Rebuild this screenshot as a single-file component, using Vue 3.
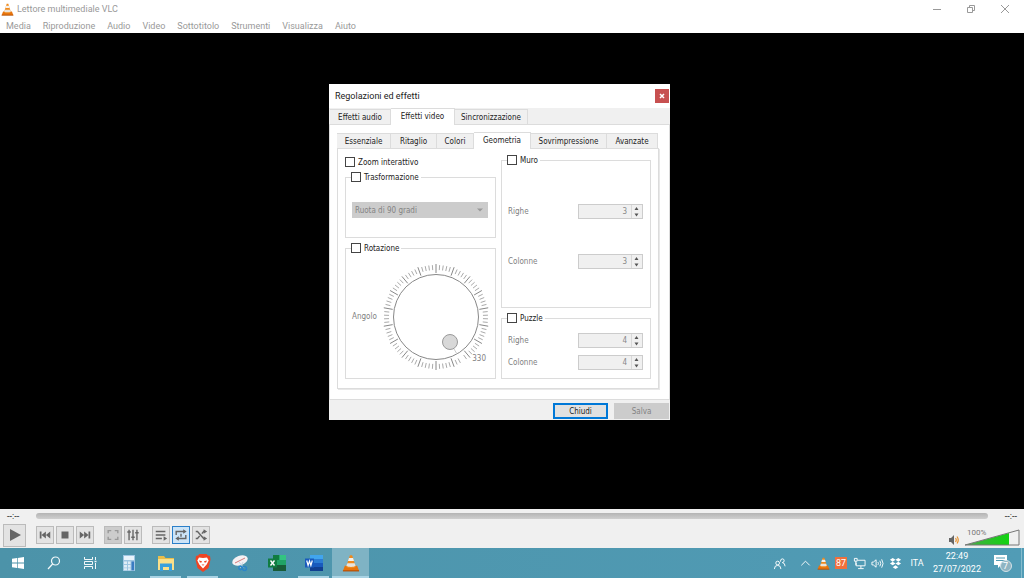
<script setup>
const menus = ['Media', 'Riproduzione', 'Audio', 'Video', 'Sottotitolo', 'Strumenti', 'Visualizza', 'Aiuto']
const outerTabs = ['Effetti audio', 'Effetti video', 'Sincronizzazione']
const innerTabs = ['Essenziale', 'Ritaglio', 'Colori', 'Geometria', 'Sovrimpressione', 'Avanzate']
const ticks = Array.from({ length: 90 }, (_, i) => i)
  .filter((i) => i !== 37)
  .map((i) => {
    const a = (i * 4 * Math.PI) / 180
    const inner = i % 5 === 0 ? 44 : 47
    const outer = i % 5 === 0 ? 53 : 52
    return {
      major: i % 5 === 0,
      x1: 54 + inner * Math.sin(a),
      y1: 54 - inner * Math.cos(a),
      x2: 54 + outer * Math.sin(a),
      y2: 54 - outer * Math.cos(a)
    }
  })
const wall = [
  { id: 'muro-righe', label: 'Righe', value: 3 },
  { id: 'muro-colonne', label: 'Colonne', value: 3 }
]
const puzzle = [
  { id: 'puzzle-righe', label: 'Righe', value: 4 },
  { id: 'puzzle-colonne', label: 'Colonne', value: 4 }
]
</script>

<template>
  <div class="screen">
    <svg class="defs" width="0" height="0" aria-hidden="true">
      <symbol id="cone" viewBox="0 0 16 16">
        <path d="M2.500 10.500h11l1.700 4.500H.8z" fill="#e8740c" />
        <path d="M7 1h2l3.300 10.600c-1.600 1.400-7 1.400-8.600 0z" fill="#f08a1c" />
        <path d="M6.200 3.500h3.600l.9 2.700H5.300z" fill="#f4f1ec" />
        <path d="M4.700 8.200h6.600l.8 2.500c-1.700 1-6.500 1-8.200 0z" fill="#e9e4dc" />
        <path d="M.8 15h14.400" stroke="#b04d06" />
      </symbol>
    </svg>

    <header class="titlebar">
      <svg class="app-icon" viewBox="0 0 16 16"><use href="#cone" /></svg>
      <span class="app-title">Lettore multimediale VLC</span>
      <div class="win-controls">
        <button aria-label="Riduci a icona"><svg viewBox="0 0 10 10"><path d="M1 5.500h8" /></svg></button>
        <button aria-label="Ripristina"><svg viewBox="0 0 10 10"><path d="M1.500 3.500h5v5h-5zM3.500 3.500v-2h5v5h-2" /></svg></button>
        <button aria-label="Chiudi finestra"><svg viewBox="0 0 10 10"><path d="M1 1l8 8M9 1L1 9" /></svg></button>
      </div>
    </header>
    <nav class="menubar">
      <button v-for="m in menus" :key="m">{{ m }}</button>
    </nav>

    <main class="video">
      <section class="dialog" role="dialog" aria-labelledby="dialog-title">
        <div class="dialog-title">
          <h1 id="dialog-title">Regolazioni ed effetti</h1>
          <button class="close" aria-label="Chiudi dialogo"><svg viewBox="0 0 8 8"><path d="M2 2l4 4M6 2L2 6" /></svg></button>
        </div>
        <div class="tabs outer" role="tablist">
          <button v-for="(t, i) in outerTabs" :key="t" role="tab" :aria-selected="i === 1" :class="{ on: i === 1 }">{{ t }}</button>
        </div>
        <div class="outer-panel">
          <div class="tabs inner" role="tablist">
            <button v-for="(t, i) in innerTabs" :key="t" role="tab" :aria-selected="i === 3" :class="{ on: i === 3 }">{{ t }}</button>
          </div>
          <div class="inner-panel">
            <div class="column">
              <label class="check zoom-check"><input type="checkbox" /><span>Zoom interattivo</span></label>
              <fieldset class="transform-group">
                <legend><label class="check"><input type="checkbox" /><span>Trasformazione</span></label></legend>
                <div class="combo">
                  <select aria-label="Tipo di trasformazione" disabled><option>Ruota di 90 gradi</option></select>
                  <svg viewBox="0 0 8 6"><path d="M1 1.500l3 3 3-3z" /></svg>
                </div>
              </fieldset>
              <fieldset class="rotation-group">
                <legend><label class="check"><input type="checkbox" /><span>Rotazione</span></label></legend>
                <div class="rotation">
                  <span class="muted">Angolo</span>
                  <div class="dial">
                    <svg viewBox="0 0 108 108" role="img" aria-label="Manopola angolo">
                      <line v-for="(t, i) in ticks" :key="i" :x1="t.x1" :y1="t.y1" :x2="t.x2" :y2="t.y2" :class="{ major: t.major }" />
                      <circle class="ring" cx="54" cy="54" r="42.500" />
                      <path class="pointer" d="M72 86l3 5" />
                      <circle class="knob" cx="68" cy="79" r="7.500" />
                    </svg>
                    <output class="angle">330</output>
                  </div>
                </div>
              </fieldset>
            </div>
            <div class="column right">
              <fieldset class="wall-group">
                <legend><label class="check"><input type="checkbox" /><span>Muro</span></label></legend>
                <div v-for="f in wall" :key="f.id" class="field">
                  <label :for="f.id">{{ f.label }}</label>
                  <div class="spin">
                    <input :id="f.id" type="number" :value="f.value" disabled />
                    <svg viewBox="0 0 11 13"><path class="sep" d="M.5 0v13" /><path d="M3.500 5l2-3 2 3zM3.500 8.500l2 3 2-3z" /></svg>
                  </div>
                </div>
              </fieldset>
              <fieldset class="puzzle-group">
                <legend><label class="check"><input type="checkbox" /><span>Puzzle</span></label></legend>
                <div v-for="f in puzzle" :key="f.id" class="field">
                  <label :for="f.id">{{ f.label }}</label>
                  <div class="spin">
                    <input :id="f.id" type="number" :value="f.value" disabled />
                    <svg viewBox="0 0 11 13"><path class="sep" d="M.5 0v13" /><path d="M3.500 5l2-3 2 3zM3.500 8.500l2 3 2-3z" /></svg>
                  </div>
                </div>
              </fieldset>
            </div>
          </div>
        </div>
        <div class="dialog-footer">
          <button class="primary">Chiudi</button>
          <button disabled>Salva</button>
        </div>
      </section>
    </main>

    <section class="controls">
      <div class="seek">
        <span>--:--</span>
        <input type="range" min="0" max="100" value="0" aria-label="Posizione" disabled />
        <span>--:--</span>
      </div>
      <div class="buttons">
        <button class="play" aria-label="Riproduci"><svg viewBox="0 0 16 16"><path d="M3 2l11 6-11 6z" /></svg></button>
        <div class="group">
          <button aria-label="Precedente"><svg viewBox="0 0 16 16"><path d="M2 4h2v8H2zM9 4v8L4 8zM14 4v8L9 8z" /></svg></button>
          <button aria-label="Ferma"><svg viewBox="0 0 16 16"><path d="M4 4h8v8H4z" /></svg></button>
          <button aria-label="Successivo"><svg viewBox="0 0 16 16"><path d="M12 4h2v8h-2zM7 4v8l5-4zM2 4v8l5-4z" /></svg></button>
        </div>
        <div class="group">
          <button class="off" aria-label="Schermo intero"><svg viewBox="0 0 16 16"><path class="line" d="M2.500 6V3H6M10 3h3.500v3M13.500 10v3H10M6 13H2.500v-3" /></svg></button>
          <button aria-label="Impostazioni estese"><svg viewBox="0 0 16 16"><path class="line" d="M3.500 2v12M8 2v12M12.500 2v12M1.500 4.500h4M6 10.500h4M10.500 5.500h4" /></svg></button>
        </div>
        <div class="group">
          <button aria-label="Scaletta"><svg viewBox="0 0 16 16"><path class="line" d="M2 4h11M2 8h11M2 12h7" /><path d="M11 9.500l4 2.500-4 2.500z" /></svg></button>
          <button class="active" aria-label="Ripeti"><svg viewBox="0 0 16 16"><path class="line" d="M2.500 8V4H12M13.500 8v4H4M8 6.500v3.500" /><path d="M10.500 1.500l4 2.500-4 2.500zM5.500 9.500l-4 2.500 4 2.500z" /></svg></button>
          <button aria-label="Casuale"><svg viewBox="0 0 16 16"><path class="line" d="M2 4h2l7 8h1M2 12h2l2.500-3M9 6.500L11 4h1" /><path d="M11 1.500l4 2.500-4 2.500zM11 9.500l4 2.500-4 2.500z" /></svg></button>
        </div>
        <div class="volume">
          <svg class="speaker" viewBox="0 0 12 12"><path d="M1 4h2l3-3v10L3 8H1z" fill="#666" /><path d="M7.500 4q1.500 2 0 4M9 2.500q2.500 3.500 0 7" fill="none" stroke="#e8912c" stroke-width="1.200" /></svg>
          <label class="vol-slider">
            <svg viewBox="0 0 56 17">
              <defs><linearGradient id="vol"><stop offset="0" stop-color="#5fa05f" /><stop offset=".35" stop-color="#35b735" /><stop offset="1" stop-color="#12d312" /></linearGradient></defs>
              <path d="M1 16L45 4v12z" fill="url(#vol)" />
              <path d="M1 16L55 1v15z" fill="none" stroke="#777" />
            </svg>
            <span>100%</span>
            <input type="range" min="0" max="125" value="100" aria-label="Volume" />
          </label>
        </div>
      </div>
    </section>

    <footer class="taskbar">
      <div class="system">
        <button aria-label="Start"><svg viewBox="0 0 16 16" fill="#fff"><path d="M2 3.700l5-.7v4.600H2zM7.700 2.900L14 2v5.600H7.700zM2 8.400h5V13l-5-.7zM7.700 8.400H14V14l-6.300-.9z" /></svg></button>
        <button aria-label="Cerca"><svg viewBox="0 0 16 16" fill="none" stroke="#f2f8fa" stroke-width="1.200"><circle cx="9.500" cy="6" r="4" /><path d="M6.600 9L2 14" /></svg></button>
        <button aria-label="Visualizzazione attività"><svg viewBox="0 0 16 16" fill="none" stroke="#f2f8fa"><path d="M2.500 2v2.500h8V2M2.500 14v-2.500h8V14M2.500 6.500h8v3h-8zM13.500 2v3M13.500 8v6" /><path d="M12.500 6.500h2" stroke-width="1.500" /></svg></button>
      </div>
      <div class="apps">
        <button aria-label="Calcolatrice"><svg viewBox="0 0 18 18"><path d="M3 1h12v16H3z" fill="#9fc6e2" /><path d="M4 2h10v4H4z" fill="#e9f4fb" /><path d="M4 7.500h3v2.500H4zM8 7.500h2.500v2.500H8zM4 11h3v2.500H4zM8 11h2.500v2.500H8zM4 14.300h3v2H4zM8 14.300h2.500v2H8z" fill="#e0edf6" /><path d="M11.500 7.500H14v8.800h-2.500z" fill="#397bc2" /></svg></button>
        <button class="open" aria-label="Esplora file"><svg viewBox="0 0 18 18"><path d="M1 2h6l1.500 2H17v12H1z" fill="#e9bd4b" /><path d="M1 5h16v11H1z" fill="#fae08a" /><path d="M3 9.500h12V17h-3v-4H6v4H3z" fill="#3aa0dc" /></svg></button>
        <button class="open" aria-label="Brave"><svg viewBox="0 0 18 18"><path d="M5.500 0h7L14 1.500l2 .5.500 3.500-2 8.500L9 18l-5.500-4-2-8.500L2 2l2-.5z" fill="#ef4423" /><path d="M5 3.500l4 .5 4-.5 1.700 3-2 4L9 14.500l-3.700-4-2-4z" fill="#fff" /><path d="M5 6.500l3 .7-.5 1.300H6zM13 6.500l-3 .7.5 1.300H12zM7.500 10.500h3L9 11.700z" fill="#ef4423" /></svg></button>
        <button aria-label="Strumento di cattura"><svg viewBox="0 0 18 18"><ellipse cx="9" cy="6.500" rx="8" ry="4.800" fill="#f5f1f3" transform="rotate(-20 9 6.500)" /><path d="M4 9l10-5" stroke="#d47979" /><path d="M8 8l5 6M12 8l-3 6" stroke="#cbd9e4" /><circle cx="13.500" cy="14.500" r="2" fill="none" stroke="#2c86c9" stroke-width="1.500" /><circle cx="9.500" cy="14" r="1.700" fill="none" stroke="#2c86c9" stroke-width="1.500" /></svg></button>
        <button aria-label="Excel"><svg viewBox="0 0 18 18"><path d="M5 1h13v16H5z" fill="#21a366" /><path d="M5 1h6.500v5H5z" fill="#107c41" /><path d="M11.500 1H18v5h-6.500z" fill="#33c481" /><path d="M5 11h13v6H5z" fill="#185c37" /><path d="M0 4.500h9v9H0z" fill="#107c41" /><path d="M2.500 6.500l4 5M6.500 6.500l-4 5" stroke="#fff" stroke-width="1.400" /></svg></button>
        <button class="open" aria-label="Word"><svg viewBox="0 0 18 18"><path d="M5 1h13v4H5z" fill="#41a5ee" /><path d="M5 5h13v4H5z" fill="#2b7cd3" /><path d="M5 9h13v4H5z" fill="#185abd" /><path d="M5 13h13v4H5z" fill="#103f91" /><path d="M0 4.500h9v9H0z" fill="#185abd" /><path d="M1.700 6.500l1.400 5 1.400-4.500 1.400 4.500 1.400-5" fill="none" stroke="#fff" stroke-width="1.200" /></svg></button>
        <button class="open current" aria-label="VLC"><svg viewBox="0 0 16 16"><use href="#cone" /></svg></button>
      </div>
      <div class="tray">
        <button class="people" aria-label="Contatti"><svg viewBox="0 0 14 14"><circle cx="5" cy="6.500" r="2" /><path d="M1.500 13q0-4 3.500-4t3.500 4M8 5q0-3 2-3t2 2-2 2q3 .5 3 4" /></svg></button>
        <button aria-label="Icone nascoste"><svg viewBox="0 0 14 14"><path d="M2.500 9L7 4.500 11.500 9" /></svg></button>
        <button aria-label="VLC in esecuzione"><svg class="fill" viewBox="0 0 16 16"><use href="#cone" /></svg></button>
        <span class="badge">87</span>
        <button aria-label="Rete"><svg viewBox="0 0 14 14"><path d="M5 3.500h8v6H3.500V6M8.500 9.500V12M5.500 12.500h6M1.500 1.500h3v3h-3zM3 4.500V9" /></svg></button>
        <button aria-label="Audio"><svg viewBox="0 0 14 14"><path d="M1 5.500h1.500L5.500 3v8L2.500 8.500H1zM7.500 5.500q1 1.500 0 3M9.500 4q2 3 0 6M11.500 2.500q3 4.500 0 9" /></svg></button>
        <button aria-label="Dropbox"><svg class="fill" viewBox="0 0 14 14"><path fill="#fff" d="M4 1l3 2-3 2-3-2zM10 1l3 2-3 2-3-2zM4 5l3 2-3 2-3-2zM10 5l3 2-3 2-3-2zM7 9l3 2-3 2-3-2z" /></svg></button>
        <button class="lang">ITA</button>
        <button class="clock"><time>22:49</time><span>27/07/2022</span></button>
        <button class="notify" aria-label="Notifiche, 7">
          <svg class="fill" viewBox="0 0 20 20"><path d="M1 2h13v10H8l-3 3v-3H1z" fill="#fff" /><path d="M3 5h9M3 7.500h9" stroke="#519bb3" /><circle cx="13" cy="13" r="5.500" fill="#8fb4c2" stroke="#d4e2e8" /></svg>
          <span>7</span>
        </button>
      </div>
    </footer>
  </div>
</template>

<style>
html, body { margin: 0; overflow: hidden; }
</style>

<style scoped>
.screen { display: flex; flex-direction: column; height: 100vh; background: #fff; font: 9px/12px Roboto, "Open Sans", sans-serif; color: #222; }
.screen * { box-sizing: border-box; }
.defs { position: absolute; }
button, input, select { font: inherit; color: inherit; margin: 0; }
button { padding: 0; border: 0; background: none; white-space: nowrap; }
svg { display: block; flex: none; }

.titlebar { display: flex; align-items: center; height: 18px; color: #999; }
.app-icon { width: 13px; height: 13px; margin: 0 3px 0 1px; }
.win-controls { display: flex; margin-left: auto; padding-right: 2px; }
.win-controls button { width: 34px; height: 16px; display: flex; align-items: center; justify-content: center; }
.win-controls svg { width: 10px; height: 10px; fill: none; stroke: #999; }
.menubar { display: flex; gap: 12px; height: 15px; padding-left: 6px; color: #999; }

.video { position: relative; flex: 1; min-height: 0; background: #000; }
.dialog { position: absolute; left: 329px; top: 51px; width: 341px; background: #f0f0f0; font: 8px/10px "DejaVu Sans Condensed", "Open Sans", sans-serif; }
.dialog-title { display: flex; align-items: center; justify-content: space-between; height: 24px; padding: 0 1px 0 6px; background: #fff; }
h1 { margin: 0; font: 9px/12px Roboto, "Open Sans", sans-serif; color: #222; }
.close { width: 14px; height: 14px; background: #c75050; display: grid; place-items: center; }
.close svg { width: 8px; height: 8px; stroke: #fff; stroke-width: 1.5; }
.tabs { display: grid; align-items: end; }
.tabs button { height: 15px; padding-top: 2px; background: #f0f0f0; border: 1px solid #dcdcdc; border-width: 1px 1px 0 0; }
.tabs button.on { height: 17px; margin-bottom: -1px; padding-top: 0; background: #fff; position: relative; }
.outer { grid-template-columns: 61px 64px 73px; height: 16px; padding-left: 1px; }
.outer-panel { border: 1px solid #dcdcdc; background: #fff; padding: 7px 10px 10px 7px; }
.inner { grid-template-columns: 54px 46px 37px 57px 76px 51px; height: 16px; }
.inner-panel { display: grid; grid-template-columns: 151px 150px; gap: 5px; padding: 5px 7px 9px; border: 1px solid #dcdcdc; box-shadow: 1px 1px 0 #e8e8e8; }
.column { display: flex; flex-direction: column; }
.column.right { gap: 4px; }
.check { display: flex; align-items: center; gap: 3px; }
.check span { padding-top: 2px; }
.check input { appearance: none; width: 10px; height: 10px; border: 1px solid #444; background: #fff; }
.zoom-check { height: 15px; }
fieldset { min-width: 0; margin: 0; padding: 0 7px 0 6px; border: 1px solid #dcdcdc; }
legend { padding: 0 2px 0 0; margin-left: -1px; height: 12px; display: flex; align-items: center; }
.transform-group { height: 67px; margin-top: 2px; }
.combo { position: relative; margin-top: 19px; }
select { appearance: none; display: block; width: 100%; height: 16px; padding: 2px 3px 0; border: 0; background: #ccc; color: #838383; opacity: 1; }
.combo svg { position: absolute; right: 4px; top: 5px; width: 8px; height: 6px; fill: #999; }
.rotation-group { height: 137px; margin-top: 4px; padding-right: 5px; }
.rotation { display: flex; align-items: center; justify-content: space-between; padding-top: 9px; }
.muted, .field, .angle { color: #808080; }
.dial { position: relative; }
.dial svg { width: 108px; height: 108px; }
.dial line { stroke: #aaa; }
.dial line.major { stroke: #888; }
.ring { fill: #fff; stroke: #888; }
.pointer { stroke: #ccc; }
.knob { fill: #d8d8d8; stroke: #999; }
.angle { position: absolute; right: 4px; bottom: 7px; background: #fff; }
.wall-group { height: 154px; display: flex; flex-direction: column; }
.wall-group .field { margin-top: 38px; }
.field { display: flex; align-items: center; justify-content: space-between; }
.wall-group .field + .field { margin-top: 35px; }
.puzzle-group { height: 67px; }
.puzzle-group .field { margin-top: 9px; }
.puzzle-group .field + .field { margin-top: 7px; }
.spin { display: flex; width: 65px; height: 15px; border: 1px solid #ccc; background: #f0f0f0; }
.spin input { appearance: textfield; flex: 1; min-width: 0; padding: 1px 4px 0 0; border: 0; background: none; text-align: right; color: #888; }
.spin input::-webkit-inner-spin-button { appearance: none; margin: 0; }
.spin svg { width: 11px; height: 13px; fill: #555; }
.sep { stroke: #d8d8d8; }
.dialog-footer { display: flex; justify-content: flex-end; gap: 6px; padding: 3px 1px 1px 0; }
.dialog-footer button { width: 55px; height: 16px; padding-top: 1px; background: #ccc; color: #838383; }
.dialog-footer .primary { background: #e1e1e1; border: 2px solid #0078d7; color: #222; }

.controls { height: 39px; background: #f0f0f0; }
.seek { display: flex; align-items: center; gap: 17px; height: 13px; padding: 0 7px; color: #111; }
.seek input { appearance: none; flex: 1; min-width: 0; height: 6px; border-radius: 3px; background: linear-gradient(#b4b4b4, #cfcfcf); }
.seek input::-webkit-slider-thumb { appearance: none; width: 0; height: 0; }
.buttons { display: flex; align-items: center; gap: 10px; height: 26px; padding: 0 4px 0 3px; }
.buttons button { width: 18px; height: 18px; border: 1px solid #bbb; background: #e3e3e3; display: grid; place-items: center; }
.buttons button svg { width: 14px; height: 14px; fill: #666; }
.buttons .line { fill: none; stroke: #666; stroke-width: 1.6; }
.buttons .play { width: 23px; height: 23px; }
.buttons .play svg { width: 16px; height: 16px; }
.buttons .off { background: #ccc; }
.buttons .off .line { stroke: #999; }
.buttons .active { background: #cce4f7; border-color: #2a7fc9; }
.group { display: flex; gap: 2px; }
.volume { display: flex; align-items: flex-end; gap: 4px; margin-left: auto; height: 22px; }
.speaker { width: 12px; height: 12px; }
.vol-slider { position: relative; }
.vol-slider svg { width: 56px; height: 17px; }
.vol-slider span { position: absolute; left: 3px; top: 0; font-size: 8px; line-height: 8px; color: #777; }
.vol-slider input { position: absolute; inset: 0; width: 100%; height: 100%; opacity: 0; }

.taskbar { display: flex; height: 30px; background: linear-gradient(90deg, #4c93a9, #519cb6); color: #fff; }
.system, .apps, .tray { display: flex; }
.taskbar button { display: grid; place-items: center; position: relative; }
.system button { width: 36px; }
.system svg { width: 16px; height: 16px; }
.apps { margin-left: 2px; }
.apps button { width: 37px; }
.apps svg { width: 18px; height: 18px; }
.open::after { content: ""; position: absolute; left: 3px; right: 3px; bottom: 0; height: 2px; background: #a9d3e4; }
.current { background: #7fb3c4; }
.current::after { left: 0; right: 0; }
.tray { margin-left: auto; align-items: stretch; border-right: 1px solid #86bccd; margin-right: 2px; }
.tray button { width: 18px; }
.tray .people { width: 26px; margin-right: 4px; }
.tray svg { width: 13px; height: 13px; fill: none; stroke: #fff; }
.tray svg.fill { stroke: none; }
.badge { align-self: center; width: 12px; height: 12px; margin: 0 3px; background: #f0703c; text-align: center; line-height: 12px; }
.tray .lang { width: 26px; }
.tray .clock { width: 54px; align-content: center; line-height: 13px; }
.tray .notify { width: 37px; }
.tray .notify svg { width: 20px; height: 20px; }
.notify span { position: absolute; left: 19px; top: 12px; }
</style>
